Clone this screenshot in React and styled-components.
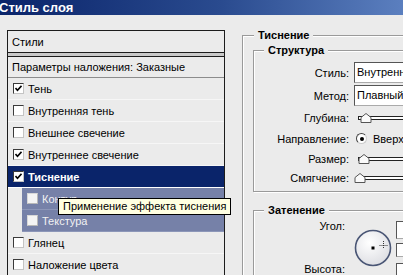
import React from "react";
import styled, { createGlobalStyle } from "styled-components";

const GlobalStyle = createGlobalStyle`
  html, body {
    margin: 0;
    padding: 0;
    background: #ebebeb;
    overflow: hidden;
  }
  body {
    font-family: "Liberation Sans", Arial, sans-serif;
    font-size: 11px;
    color: #000;
  }
`;

const Window = styled.div`
  width: 403px;
  height: 275px;
  overflow: hidden;
  display: flex;
  flex-direction: column;
  background: #ebebeb;
`;

const TitleBar = styled.div`
  height: 15px;
  line-height: 15px;
  flex-shrink: 0;
  background: linear-gradient(90deg, #0a246a 0%, #2a4b8f 55%, #5b7fbf 100%);
  color: #fff;
  font-weight: bold;
  font-size: 13px;
  text-indent: -1px;
  white-space: nowrap;
`;

const Main = styled.div`
  display: flex;
  align-items: flex-start;
  padding: 15px 0 0 7px;
`;

const LeftPanel = styled.div`
  position: relative;
  width: 216px;
  flex-shrink: 0;
  border: 1px solid #1c1c1c;
  border-bottom: none;
  height: 260px;
`;

const HeaderRow = styled.div`
  height: 21px;
  display: flex;
  align-items: center;
  padding-left: 4px;
  border-bottom: 1px solid #1c1c1c;
`;

const DoubleGap = styled.div`
  height: 3px;
  background: #c9c9c9;
  border-bottom: 1px solid #1c1c1c;
`;

const ParamRow = styled.div`
  height: 20px;
  display: flex;
  align-items: center;
  padding-left: 4px;
  border-bottom: 1px solid #8c8c8c;
  white-space: nowrap;
`;

const StyleRow = styled.div`
  height: 21px;
  display: flex;
  align-items: center;
  gap: 4px;
  white-space: nowrap;
  border-bottom: 1px solid ${(p) => (p.$selected ? "#ffffff" : p.$sub ? "#8c96b8" : "#f6f6f6")};
  margin-left: ${(p) => (p.$sub ? "14px" : "0")};
  padding-left: 5px;
  background: ${(p) => (p.$selected ? "#0a246a" : p.$sub ? "#7681a8" : "transparent")};
  color: ${(p) => (p.$selected ? "#fff" : p.$sub ? "#f2f2f2" : "#000")};
  font-weight: ${(p) => (p.$selected ? "bold" : "normal")};
`;

const Box = styled.span`
  width: 9px;
  height: 9px;
  flex-shrink: 0;
  display: flex;
  align-items: center;
  justify-content: center;
  background: ${(p) => (p.$sub ? "#f4f4f4" : "#fff")};
  border: 1px solid;
  border-color: ${(p) =>
    p.$sub ? "#d8d8d8 #b8b8b8 #b8b8b8 #d8d8d8" : "#3a3a3a #c4c4c4 #c4c4c4 #3a3a3a"};
`;

const Tooltip = styled.div`
  position: absolute;
  left: 50px;
  top: 167px;
  z-index: 5;
  height: 15px;
  line-height: 15px;
  padding: 0 4px;
  background: #ffffe1;
  border: 1px solid #000;
  white-space: nowrap;
  font-size: 11px;
`;

const RightCol = styled.div`
  margin-left: 17px;
  margin-top: -1px;
  flex-shrink: 0;
  width: 220px;
`;

const Group = styled.fieldset`
  margin: ${(p) => p.$margin || "0"};
  padding: ${(p) => p.$pad};
  border: 1px solid #9a9a9a;
  box-shadow: inset 1px 1px 0 #fff, 1px 1px 0 #fff;
  min-width: 0;
  min-height: ${(p) => p.$minH || "0"};
`;

const Legend = styled.legend`
  margin-left: ${(p) => p.$ml}px;
  padding: 0 4px;
  font-weight: bold;
  line-height: 13px;
  font-size: 11px;
  background: #ebebeb;
`;

const FieldRow = styled.div`
  display: flex;
  align-items: center;
  height: ${(p) => p.$h}px;
`;

const Label = styled.span`
  width: ${(p) => p.$w || 95}px;
  flex-shrink: 0;
  text-align: right;
  white-space: nowrap;
`;

const SelectBox = styled.div`
  margin-left: 5px;
  width: 110px;
  height: 19px;
  flex-shrink: 0;
  background: #fff;
  border: 1px solid;
  border-color: #555 #aaa #aaa #555;
  line-height: 19px;
  padding-left: 2px;
  white-space: nowrap;
  overflow: hidden;
`;

const SliderSvg = styled.svg`
  margin-left: 5px;
  flex-shrink: 0;
  display: block;
`;

const Radio = styled.span`
  margin-left: 7px;
  width: 9px;
  height: 9px;
  border-radius: 50%;
  border: 1px solid;
  border-color: #444 #ccc #ccc #444;
  background: #fff;
  display: flex;
  align-items: center;
  justify-content: center;
  flex-shrink: 0;
  &::after {
    content: "";
    width: 4px;
    height: 4px;
    border-radius: 50%;
    background: #000;
  }
`;

const RadioText = styled.span`
  margin-left: 6px;
  white-space: nowrap;
`;

const ShadeBody = styled.div`
  display: flex;
  align-items: flex-start;
`;

const ShadeLabels = styled.div`
  width: 91px;
  height: 55px;
  display: flex;
  flex-direction: column;
  justify-content: space-between;
  text-align: right;
  flex-shrink: 0;
`;

const Dial = styled.svg`
  margin: 9px 0 0 9px;
  flex-shrink: 0;
  display: block;
`;

const SideControls = styled.div`
  margin-left: 4px;
  display: flex;
  flex-direction: column;
  flex-shrink: 0;
`;

const SideBox = styled.div`
  width: 30px;
  height: ${(p) => p.$h}px;
  margin-top: ${(p) => p.$mt}px;
  background: #fff;
  border: 1px solid;
  border-color: #555 #aaa #aaa #555;
`;

const Check = ({ color = "#000" }) => (
  <svg width="7" height="7" viewBox="0 0 7 7">
    <path d="M0.5 3 L2.5 5.2 L6.5 0.8" fill="none" stroke={color} strokeWidth="1.6" />
  </svg>
);

const Slider = ({ pos }) => (
  <SliderSvg width="60" height="12" viewBox="0 0 60 12">
    <rect x="4.5" y="4.5" width="60" height="3" fill="#fff" stroke="#222" />
    <polygon
      points={`${pos - 5},5.5 ${pos},1.5 ${pos + 5},5.5 ${pos + 5},10.5 ${pos - 5},10.5`}
      fill="#fafafa"
      stroke="#555"
    />
  </SliderSvg>
);

const rows = [
  { label: "Тень", checked: true },
  { label: "Внутренняя тень" },
  { label: "Внешнее свечение" },
  { label: "Внутреннее свечение", checked: true },
  { label: "Тиснение", checked: true, selected: true },
  { label: "Контур", sub: true },
  { label: "Текстура", sub: true },
  { label: "Глянец" },
  { label: "Наложение цвета" },
];

export default function App() {
  return (
    <Window>
      <GlobalStyle />
      <TitleBar>Стиль слоя</TitleBar>
      <Main>
        <LeftPanel>
          <HeaderRow>Стили</HeaderRow>
          <DoubleGap />
          <ParamRow>Параметры наложения: Заказные</ParamRow>
          {rows.map((r) => (
            <StyleRow key={r.label} $selected={r.selected} $sub={r.sub}>
              <Box $sub={r.sub}>{r.checked && <Check />}</Box>
              {r.label}
            </StyleRow>
          ))}
          <Tooltip>Применение эффекта тиснения</Tooltip>
        </LeftPanel>
        <RightCol>
          <Group $pad="2px 0 0 10px" $minH="260px">
            <Legend $ml={1}>Тиснение</Legend>
            <Group $pad="4px 0 3px 0">
              <Legend $ml={10}>Структура</Legend>
              <FieldRow $h={23}>
                <Label>Стиль:</Label>
                <SelectBox>Внутренний скос</SelectBox>
              </FieldRow>
              <FieldRow $h={23}>
                <Label>Метод:</Label>
                <SelectBox>Плавный</SelectBox>
              </FieldRow>
              <FieldRow $h={21}>
                <Label>Глубина:</Label>
                <Slider pos={12} />
              </FieldRow>
              <FieldRow $h={21}>
                <Label>Направление:</Label>
                <Radio />
                <RadioText>Вверх</RadioText>
              </FieldRow>
              <FieldRow $h={19}>
                <Label>Размер:</Label>
                <Slider pos={10} />
              </FieldRow>
              <FieldRow $h={20}>
                <Label>Смягчение:</Label>
                <Slider pos={6} />
              </FieldRow>
            </Group>
            <Group $pad="3px 0 10px 0" $margin="12px 0 0 0">
              <Legend $ml={10}>Затенение</Legend>
              <ShadeBody>
                <ShadeLabels>
                  <span>Угол:</span>
                  <span>Высота:</span>
                </ShadeLabels>
                <Dial width="38" height="38" viewBox="0 0 38 38">
                  <defs>
                    <radialGradient id="dialFill" cx="0.4" cy="0.35" r="0.7">
                      <stop offset="0" stopColor="#ffffff" />
                      <stop offset="1" stopColor="#dcdde2" />
                    </radialGradient>
                  </defs>
                  <circle cx="19" cy="19" r="17.5" fill="url(#dialFill)" stroke="#4a5675" strokeWidth="1.6" />
                  <rect x="17.5" y="17.5" width="3" height="3" fill="#000" />
                  <g stroke="#333" strokeWidth="1" strokeDasharray="1 1">
                    <line x1="29.5" y1="12" x2="29.5" y2="20" />
                    <line x1="25.5" y1="16.5" x2="34" y2="16.5" />
                  </g>
                </Dial>
                <SideControls>
                  <SideBox $h={16} $mt={1} />
                  <SideBox $h={12} $mt={4} />
                  <SideBox $h={18} $mt={6} />
                </SideControls>
              </ShadeBody>
            </Group>
          </Group>
        </RightCol>
      </Main>
    </Window>
  );
}
